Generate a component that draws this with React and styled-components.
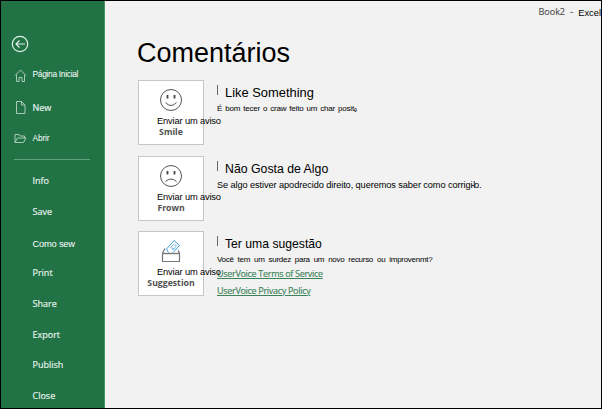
import React from "react";
import styled, { createGlobalStyle } from "styled-components";

const GlobalStyle = createGlobalStyle`
  * { box-sizing: border-box; }
  body { margin: 0; background: #f2f2f2; }
`;

const Window = styled.div`
  display: flex;
  width: 602px;
  height: 409px;
  overflow: hidden;
  border: 1px solid #000;
  background: #f2f2f2;
  font-family: "Liberation Sans", Arial, sans-serif;
  color: #000;
`;

const Sidebar = styled.nav`
  flex: none;
  width: 104px;
  padding-top: 34px;
  background: #217346;
  border-right: 1px solid #439467;
  color: #e4f0e9;
`;

const BackButton = styled.button`
  display: block;
  width: 18px;
  height: 18px;
  margin: 0 0 6px 10px;
  padding: 0;
  border: 0;
  background: none;
`;

const NavItem = styled.a`
  display: grid;
  grid-template-columns: 18px 1fr;
  align-items: center;
  height: ${(p) => p.$height}px;
  padding-left: 13px;
  white-space: nowrap;
`;

const Label = styled.span`
  grid-column: 2;
  font-family: ${(p) => (p.$translated ? '"Liberation Sans", Arial' : '"Open Sans", "Noto Sans"')}, sans-serif;
  font-size: ${(p) => p.$size || 9}px;
  line-height: 12px;
  letter-spacing: ${(p) => p.$spacing || 0}px;
  color: ${(p) => (p.$translated ? "#fff" : "#e4f0e9")};
  -webkit-text-stroke: ${(p) => (p.$translated ? 0 : 0.2)}px currentColor;
  padding-left: 0.5px;
  margin-top: ${(p) => (p.$shift || 0) * 2}px;
`;

const Divider = styled.hr`
  width: 76px;
  height: 1px;
  margin: 5px 0 6px 13px;
  border: 0;
  background: #5fa37e;
`;

const Main = styled.main`
  flex: 1;
  min-width: 0;
`;

const TitleBar = styled.header`
  display: flex;
  justify-content: flex-end;
  height: 36px;
  padding-top: 3px;
  gap: 5px;
  line-height: 14px;
  white-space: nowrap;
`;

const BookName = styled.span`
  font: 9px/15px "Open Sans", sans-serif;
  color: #505050;
  -webkit-text-stroke: 0.15px currentColor;
  word-spacing: 3px;
`;

const AppName = styled.span`
  font-size: 9.3px;
  line-height: 18px;
`;

const Heading = styled.h1`
  height: 43px;
  margin: 0 0 0 32px;
  font-size: 27px;
  font-weight: 400;
  line-height: 33px;
`;

const Row = styled.section`
  display: flex;
  height: 75.5px;
  padding-left: 33px;
`;

const Card = styled.button`
  position: relative;
  flex: none;
  display: flex;
  flex-direction: column;
  align-items: center;
  width: 66px;
  height: 65px;
  margin: 0 13px 0 0;
  padding: 7px 0 0;
  border: 1px solid #c6c6c6;
  background: #fff;
  font-family: inherit;
  color: #000;
`;

const CardCaption = styled.span`
  margin-top: 13px;
  font: 700 8.7px/14px "Open Sans", sans-serif;
  color: #505050;
`;

const CardOverlay = styled.span`
  position: absolute;
  left: 18px;
  top: 34px;
  font-size: 9.3px;
  line-height: 12px;
  letter-spacing: -0.15px;
  white-space: nowrap;
`;

const Details = styled.div`
  white-space: nowrap;
`;

const Subject = styled.h2`
  display: flex;
  height: 18px;
  gap: 7px;
  margin: 5px 0 0;
  font-size: ${(p) => p.$size}px;
  font-weight: 400;
  line-height: 16px;
`;

const Tick = styled.i`
  width: 1px;
  height: 10px;
  background: #666;
`;

const Description = styled.p`
  height: 12px;
  margin: 0;
  font-size: ${(p) => p.$size}px;
  line-height: 12px;
  letter-spacing: ${(p) => p.$spacing || 0}px;
  word-spacing: ${(p) => p.$words || 0}px;
`;

const Overlap = styled.span`
  letter-spacing: -1.2px;
`;

const PolicyLink = styled.a`
  display: block;
  height: 16.5px;
  font: 9px/16px "Open Sans", sans-serif;
  letter-spacing: -0.3px;
  color: #3c8259;
  -webkit-text-stroke: 0.15px currentColor;
  text-decoration: underline;
`;

const BackIcon = () => (
  <svg width="18" height="18" viewBox="0 0 18 18" fill="none" stroke="#e4f0e9" strokeWidth="1.2">
    <circle cx="9" cy="9" r="7.7" />
    <path d="M14 9H5M8.500 5.500 5 9l3.500 3.500" />
  </svg>
);

const HomeIcon = () => (
  <svg width="13" height="13" viewBox="0 0 13 13" fill="none" stroke="#a9cbb8">
    <path d="M1 6.500 6.500 1 12 6.500M2.500 5.500v7h2.500v-4h3v4h2.500v-7" />
  </svg>
);

const FileIcon = () => (
  <svg width="13" height="13" viewBox="0 0 13 13" fill="none" stroke="#a9cbb8">
    <path d="M2.500.5h5l3.500 3.500v8.500H2.500zM7.500.5V4H11" />
  </svg>
);

const FolderIcon = () => (
  <svg width="13" height="13" viewBox="0 0 13 13" fill="none" stroke="#a9cbb8">
    <path d="M1 10.500v-8h4L6 4h4.500v2M1 10.500 3.500 6H12l-2.500 4.500z" />
  </svg>
);

const FaceIcon = ({ sad }) => (
  <svg width="24" height="24" viewBox="0 0 24 24" fill="none" stroke="#555">
    <circle cx="12" cy="12" r="10.500" />
    <path d="M8.500 7v3.500M15.500 7v3.500" strokeWidth="1.800" stroke="#444" />
    <path d={sad ? "M6.500 17.500q5.500-5 11 0" : "M6.500 14.500q5.500 6 11 0"} />
  </svg>
);

const SuggestionIcon = () => (
  <svg width="24" height="24" viewBox="0 0 24 24" fill="none" stroke="#777">
    <path d="M6 9.500 3.500 14v8.500h17V14L18 9.500" strokeWidth="1.200" />
    <path d="M7.500 10v4h10.500L20.500 6.500 15 1.500z" fill="#fff" stroke="none" />
    <path d="M9.500 13.500 7.500 10 15 1.500l5.500 5-6.500 7" stroke="#3b9bd8" />
    <path d="m11.500 8.500 3-3 3 1-2.500 3.500zM13 11l2-1.500" stroke="#7dbce6" />
    <path d="M3.500 14.500h17" strokeWidth="1.400" />
  </svg>
);

const places = [
  { text: "Página Inicial", icon: <HomeIcon />, height: 33, translated: true, size: 8.4, spacing: -0.3, shift: -2 },
  { text: "New", icon: <FileIcon />, height: 31, size: 9 },
  { text: "Abrir", icon: <FolderIcon />, height: 31, translated: true, size: 8.3, spacing: -0.1, shift: -0.5 },
];

const commands = [
  { text: "Info" },
  { text: "Save" },
  { text: "Como sew", translated: true, size: 9.3, spacing: -0.2, shift: 1 },
  { text: "Print" },
  { text: "Share" },
  { text: "Export" },
  { text: "Publish" },
  { text: "Close" },
];

const topics = [
  {
    icon: <FaceIcon />,
    caption: "Smile",
    title: "Like Something",
    titleSize: 12.9,
    description: "É bom tecer o craw feito um char positₑ",
    size: 8,
    spacing: -0.2,
    words: 1,
  },
  {
    icon: <FaceIcon sad />,
    caption: "Frown",
    title: "Não Gosta de Algo",
    titleSize: 12.3,
    description: <>Se algo estiver apodrecido direito, queremos saber como corrig<Overlap>i-l</Overlap>o.</>,
    size: 9.2,
    spacing: -0.08,
  },
  {
    icon: <SuggestionIcon />,
    caption: "Suggestion",
    title: "Ter uma sugestão",
    titleSize: 12.2,
    description: "Você tem um surdez para um novo recurso ou improvenmt?",
    size: 8,
    spacing: -0.28,
    words: 2,
    links: ["UserVoice Terms of Service", "UserVoice Privacy Policy"],
  },
];

const NavEntry = ({ item, height }) => (
  <NavItem $height={height}>
    {item.icon}
    <Label $translated={item.translated} $size={item.size} $spacing={item.spacing} $shift={item.shift}>
      {item.text}
    </Label>
  </NavItem>
);

export default function App() {
  return (
    <Window>
      <GlobalStyle />
      <Sidebar>
        <BackButton aria-label="Back"><BackIcon /></BackButton>
        {places.map((item) => <NavEntry key={item.text} item={item} height={item.height} />)}
        <Divider />
        {commands.map((item) => <NavEntry key={item.text} item={item} height={30.7} />)}
      </Sidebar>
      <Main>
        <TitleBar>
          <BookName>Book2 -</BookName>
          <AppName>Excel</AppName>
        </TitleBar>
        <Heading>Comentários</Heading>
        {topics.map((topic) => (
          <Row key={topic.caption}>
            <Card>
              {topic.icon}
              <CardCaption>{topic.caption}</CardCaption>
              <CardOverlay>Enviar um aviso</CardOverlay>
            </Card>
            <Details>
              <Subject $size={topic.titleSize}><Tick />{topic.title}</Subject>
              <Description $size={topic.size} $words={topic.words} $spacing={topic.spacing}>
                {topic.description}
              </Description>
              {topic.links?.map((link) => <PolicyLink key={link}>{link}</PolicyLink>)}
            </Details>
          </Row>
        ))}
      </Main>
    </Window>
  );
}
